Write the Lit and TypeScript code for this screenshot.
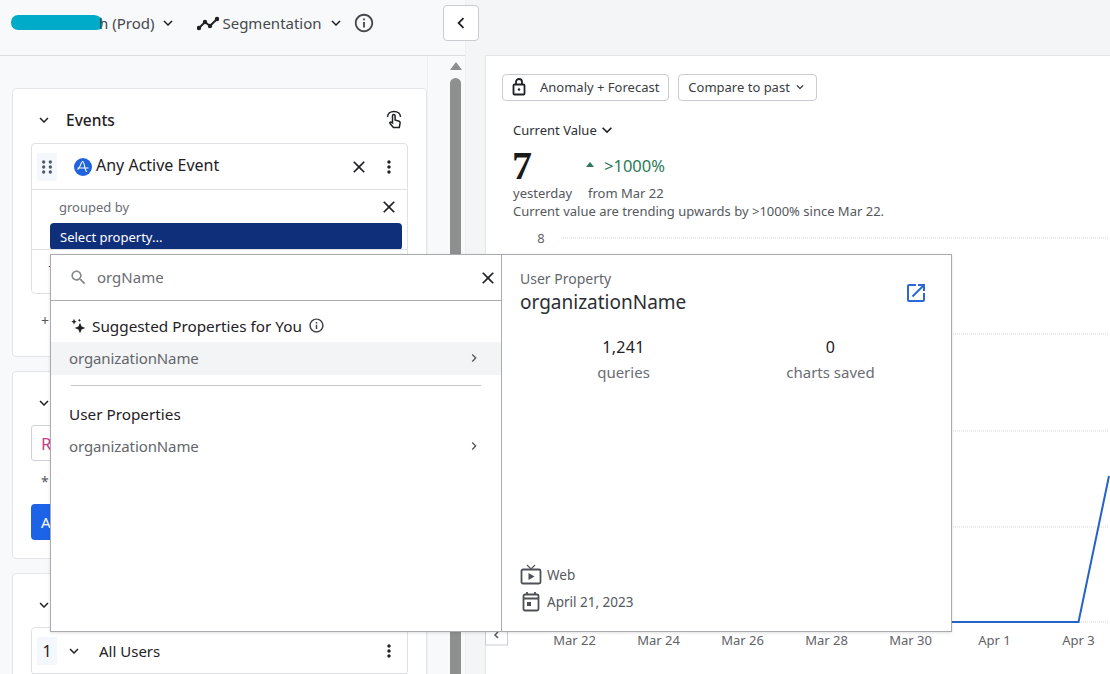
import { LitElement, html, css, svg } from "lit";
import { customElement } from "lit/decorators.js";

const P = {
  close: "M19 6.41 17.59 5 12 10.59 6.41 5 5 6.41 10.59 12 5 17.59 6.41 19 12 13.41 17.59 19 19 17.59 13.41 12z",
  down: "M16.59 8.59 12 13.17 7.41 8.59 6 10l6 6 6-6z",
  right: "M10 6 8.59 7.41 13.17 12l-4.58 4.59L10 18l6-6z",
  left: "M15.41 7.41 14 6l-6 6 6 6 1.41-1.41L10.83 12z",
  info: "M11 7h2v2h-2zm0 4h2v6h-2zm1-9C6.48 2 2 6.48 2 12s4.48 10 10 10 10-4.48 10-10S17.52 2 12 2zm0 18c-4.41 0-8-3.59-8-8s3.59-8 8-8 8 3.59 8 8-3.59 8-8 8z",
  search: "M15.5 14h-.79l-.28-.27C15.41 12.59 16 11.11 16 9.5 16 5.91 13.09 3 9.5 3S3 5.91 3 9.5 5.91 16 9.5 16c1.61 0 3.09-.59 4.23-1.57l.27.28v.79l5 4.99L20.49 19l-4.99-5zm-6 0C7.01 14 5 11.99 5 9.5S7.01 5 9.5 5 14 7.01 14 9.5 11.99 14 9.5 14z",
  open: "M19 19H5V5h7V3H5c-1.11 0-2 .9-2 2v14c0 1.1.89 2 2 2h14c1.1 0 2-.9 2-2v-7h-2v7zM14 3v2h3.59l-9.83 9.83 1.41 1.41L19 6.41V10h2V3h-7z",
  kebab: "M12 8c1.1 0 2-.9 2-2s-.9-2-2-2-2 .9-2 2 .9 2 2 2zm0 2c-1.1 0-2 .9-2 2s.9 2 2 2 2-.9 2-2-.9-2-2-2zm0 6c-1.1 0-2 .9-2 2s.9 2 2 2 2-.9 2-2-.9-2-2-2z",
  drag: "M8 4a2 2 0 1 1 0 4 2 2 0 0 1 0-4zm8 0a2 2 0 1 1 0 4 2 2 0 0 1 0-4zM8 10a2 2 0 1 1 0 4 2 2 0 0 1 0-4zm8 0a2 2 0 1 1 0 4 2 2 0 0 1 0-4zM8 16a2 2 0 1 1 0 4 2 2 0 0 1 0-4zm8 0a2 2 0 1 1 0 4 2 2 0 0 1 0-4z",
  spark: "M15 7l2.4 5.6L23 15l-5.6 2.4L15 23l-2.4-5.6L7 15l5.6-2.4zM6 1l1.2 3.3L10 5.5 7.2 6.7 6 10 4.8 6.7 2 5.5l2.8-1.2zM14 1l.8 1.7 1.7.8-1.7.8-.8 1.7-.8-1.7-1.7-.8 1.7-.8z",
};

const icon = (d: string, size: number, color = "#1f2125") =>
  html`<svg width=${size} height=${size} viewBox="0 0 24 24" fill=${color} class="ic"><path d=${d}></path></svg>`;

const gridYs = [238, 334, 431, 527, 622];
const dates = ["Mar 22", "Mar 24", "Mar 26", "Mar 28", "Mar 30", "Apr 1", "Apr 3"];

@customElement("app-root")
export class AppRoot extends LitElement {
  static styles = css`
    :host {
      display: block;
      width: 1110px;
      height: 674px;
      overflow: hidden;
      position: relative;
      background: #f4f5f7;
      font-family: "Noto Sans", sans-serif;
      color: #1f2125;
    }
    .ic { display: block; flex: none; }
    .app { display: flex; height: 674px; }
    .left {
      width: 466px; flex: none; display: flex; flex-direction: column;
      background: #f8f9fa; border-right: 1px solid #eef0f1; box-sizing: border-box;
    }
    .head {
      height: 56px; flex: none; box-sizing: border-box; border-bottom: 1px solid #dcdee0;
      display: flex; align-items: center; padding: 0 0 10px 11px; font-size: 15px; color: #45484d;
    }
    .scribble { width: 92px; height: 15px; border-radius: 8px 10px 7px 8px; background: #00abc9; }
    .tail { margin-left: -4px; }
    .prod-chev { margin-left: 5px; }
    .seg { margin-left: 20px; display: flex; align-items: center; gap: 3px; }
    .seg-chev { margin-left: 2px; }
    .h-info { margin-left: 8px; }
    .lbody { flex: 1; display: flex; min-height: 0; }
    .cards {
      width: 427px; flex: none; box-sizing: border-box; padding: 32px 0 0 12px;
      display: flex; flex-direction: column; gap: 14px; overflow: hidden;
    }
    .card {
      width: 415px; flex: none; box-sizing: border-box; background: #fff;
      border: 1px solid #e3e5e8; border-radius: 4px; padding: 0 18px;
    }
    .c1 { height: 269px; }
    .c2 { height: 188px; }
    .c3 { height: 120px; }
    .chead { height: 53px; box-sizing: border-box; padding: 9px 0 0 4px; display: flex; align-items: center; gap: 6px; }
    .c1 .chead { margin-bottom: 1px; }
    .chead b { font-weight: 500; font-size: 15.5px; margin-left: 7px; padding-bottom: 1px; }
    .hand { margin-right: 5px; }
    .grow { flex: 1; }
    .box { border: 1px solid #dfe1e4; border-radius: 4px; }
    .evrow {
      height: 46px; box-sizing: border-box; border-bottom: 1px solid #dfe1e4;
      display: flex; align-items: center; padding-left: 5px; padding-right: 8px;
    }
    .handle {
      width: 20px; height: 28px; background: #f4f8fc; display: flex; align-items: center; justify-content: center;
    }
    .logo { margin-left: 17px; margin-right: 4px; }
    .evname { font-size: 16px; padding-bottom: 3px; }
    .xbtn { margin-right: 10px; }
    .grp { padding: 8px 5px 0 18px; height: 59px; box-sizing: border-box; }
    .grpline { display: flex; align-items: center; justify-content: space-between; font-size: 13px; color: #6a6d72; padding: 0 3px 0 9px; height: 18px; }
    .select {
      background: #102f7b; color: #fff; border-radius: 4px; height: 27px; margin-top: 7px;
      display: flex; align-items: center; padding-left: 10px; font-size: 13px;
    }
    .box1 { height: 149px; }
    .addrow { height: 37px; border-top: 1px solid #dfe1e4; padding: 7px 0 0 16px; box-sizing: border-box; font-size: 14px; color: #55585d; }
    .plus { margin: 17px 0 0 10px; font-size: 14px; color: #55585d; }
    .input {
      height: 36px; width: 100%; box-sizing: border-box; border: 1px solid #cfd2d6; border-radius: 3px;
      color: #c2418c; font-size: 17px; display: flex; align-items: center; padding-left: 9px;
    }
    .star { margin: 11px 0 13px 10px; font-size: 14px; color: #55585d; height: 19px; }
    .cta {
      height: 36px; width: 100%; background: #1d63e8; color: #fff; border-radius: 4px; font-size: 15px;
      display: flex; align-items: center; padding-left: 10px; box-sizing: border-box;
    }
    .urow { height: 45px; display: flex; align-items: center; padding: 0 8px 0 5px; border-bottom: 1px solid #dfe1e4; }
    .num { width: 20px; height: 28px; background: #f4f8fc; display: flex; align-items: center; justify-content: center; font-size: 16px; }
    .uchev { margin: 0 16px 0 8px; }
    .uname { font-size: 15px; }
    .scroll { flex: 1; position: relative; display: flex; flex-direction: column; border-left: 1px solid #eef0f1; }
    .arrow {
      width: 0; height: 0; margin: 6px 0 0 22px;
      border-left: 6px solid transparent; border-right: 6px solid transparent; border-bottom: 8px solid #8e8e8e;
    }
    .thumb { flex: 1; width: 11px; margin: 8px 0 0 22px; background: #8f8f8f; border-radius: 6px 6px 0 0; }

    .right { flex: 1; padding: 55px 0 0 19px; min-width: 0; display: flex; }
    .rcard {
      flex: 1; background: #fff; border-top: 1px solid #e3e5e8; border-left: 1px solid #e3e5e8;
      padding: 18px 0 0 16px; box-sizing: border-box; min-width: 0;
    }
    .btns { display: flex; gap: 9px; }
    .btn {
      height: 27px; box-sizing: border-box; border: 1px solid #c9ccd0; border-radius: 4px; display: flex; align-items: center;
      font-size: 13px; color: #3a3d42; padding: 0 9px 2px 9px; gap: 3px; background: #fff;
    }
    .btn.a { gap: 14px; }
    .cur { display: flex; align-items: center; font-size: 13px; margin: 20px 0 0 11px; height: 18px; color: #2d3035; }
    .valrow { display: flex; align-items: center; margin: 9px 0 0 10px; height: 36px; }
    .seven { font-family: "Liberation Serif", serif; font-weight: 700; font-size: 40px; line-height: 36px; width: 74px; color: #1a1a1a; }
    .delta { display: flex; align-items: center; color: #2b7a57; font-size: 16.5px; gap: 10px; padding-bottom: 1px; }
    .tri { width: 0; height: 0; border-left: 4px solid transparent; border-right: 4px solid transparent; border-bottom: 5px solid #2b7a57; margin-top: -2px; }
    .sub { display: flex; font-size: 13px; color: #55585d; margin: 0 0 0 11px; height: 18px; line-height: 18px; }
    .sub span:first-child { width: 75px; }
    .desc { font-size: 13px; color: #55585d; margin-left: 11px; height: 18px; line-height: 18px; }
    .chart { display: block; margin: 8px 0 0 -17px; }
    .chart text { font-family: "Noto Sans", sans-serif; font-size: 13px; fill: #5f6267; }

    .collapse {
      position: absolute; left: 443px; top: 5px; width: 36px; height: 36px; box-sizing: border-box;
      background: #fff; border: 1px solid #c9ccd0; border-radius: 4px; display: flex; align-items: center; justify-content: center;
    }

    .pop {
      position: absolute; left: 50px; top: 254px; width: 902px; height: 378px; box-sizing: border-box;
      background: #fff; border: 1px solid #a9abae; display: flex; box-shadow: 0 1px 3px rgba(0,0,0,.12);
    }
    .pl { width: 451px; flex: none; border-right: 1px solid #a9abae; box-sizing: border-box; }
    .psearch {
      height: 46px; box-sizing: border-box; border-bottom: 1px solid #a9abae; display: flex; align-items: center;
      padding: 0 3px 0 18px; font-size: 15px; color: #6a6d72;
    }
    .psearch .q { margin-left: 9px; flex: 1; padding-bottom: 1px; }
    .sect { display: flex; align-items: center; box-sizing: border-box; font-size: 15.3px; padding: 8px 0 0 19px; height: 41px; gap: 6px; }
    .sect .inf { margin-left: 0; }
    .item {
      height: 33px; box-sizing: border-box; display: flex; align-items: center; justify-content: space-between; padding: 0 19px 2px 18px;
      font-size: 15px; letter-spacing: -0.1px; color: #63666b;
    }
    .item.hi { background: #f3f4f6; }
    .hr { height: 1px; background: #c6c8cb; margin: 10px 20px 0; }
    .sect2 { display: flex; align-items: center; box-sizing: border-box; font-size: 15.3px; padding: 4px 0 0 18px; height: 36px; margin-top: 8px; }
    .pr { flex: 1; padding: 14px 23px 0 18px; display: flex; flex-direction: column; min-width: 0; }
    .ptop { display: flex; justify-content: space-between; align-items: flex-start; }
    .popen { margin-top: 12px; }
    .ptype { font-size: 14px; color: #63666b; line-height: 20px; }
    .pname { font-size: 19px; color: #2b2e33; line-height: 26px; }
    .stats { display: grid; grid-template-columns: 207px 207px; margin-top: 20px; text-align: center; }
    .sv { font-size: 16px; line-height: 24px; letter-spacing: .3px; }
    .sl { font-size: 15px; color: #6a6d72; line-height: 26px; }
    .meta { margin-top: auto; padding-bottom: 17px; font-size: 13.5px; color: #55585d; display: flex; flex-direction: column; gap: 3px; }
    .mrow { display: flex; align-items: center; gap: 5px; height: 24px; }
  `;

  render() {
    return html`
      <div class="app">
        <section class="left">
          <header class="head">
            <span class="scribble"></span><span class="tail">h (Prod)</span>
            <span class="prod-chev">${icon(P.down, 18)}</span>
            <span class="seg">
              <svg class="ic" width="22" height="16" viewBox="0 0 22 16" fill="none" stroke="#1f2125" stroke-width="2">
                <path d="M2 13l6-6 5 4 7-7"></path>
                <circle cx="2" cy="13" r="1.2" fill="#1f2125"></circle><circle cx="8" cy="7" r="1.2" fill="#1f2125"></circle>
                <circle cx="13" cy="11" r="1.2" fill="#1f2125"></circle><circle cx="20" cy="4" r="1.2" fill="#1f2125"></circle>
              </svg>
              Segmentation <span class="seg-chev">${icon(P.down, 18)}</span>
            </span>
            <span class="h-info">${icon(P.info, 22, "#45484d")}</span>
          </header>
          <div class="lbody">
            <div class="cards">
              <div class="card c1">
                <div class="chead">
                  ${icon(P.down, 18)}<b>Events</b><span class="grow"></span>
                  <svg class="ic hand" width="18" height="20" viewBox="0 0 18 20" fill="none" stroke="#1f2125" stroke-width="1.5">
                    <path d="M2.5 7C2.5 3.5 5.5 1.5 9 1.5s6.5 2 6.5 5.5"></path>
                    <path d="M7.5 13V5.8a1.3 1.3 0 0 1 2.6 0V10l4 1.2c.9.3 1.2 1 1 1.9l-.8 4.4H8.4L5 13.6c-.7-.8.5-2 1.5-1.2z" fill="#fff"></path>
                  </svg>
                </div>
                <div class="box box1">
                  <div class="evrow">
                    <div class="handle">${icon(P.drag, 20, "#4c5a6a")}</div>
                    <svg class="logo ic" width="18" height="18" viewBox="0 0 18 18">
                      <circle cx="9" cy="9" r="9" fill="#1f63dd"></circle>
                      <path d="M3.5 11.5C6 11 7 3.5 8.7 3.5S11 14 13 13.5M3.5 10h11" fill="none" stroke="#fff" stroke-width="1.1"></path>
                    </svg>
                    <span class="evname">Any Active Event</span><span class="grow"></span>
                    <span class="xbtn">${icon(P.close, 20)}</span>
                    ${icon(P.kebab, 20)}
                  </div>
                  <div class="grp">
                    <div class="grpline"><span>grouped by</span>${icon(P.close, 20)}</div>
                    <div class="select">Select property...</div>
                  </div>
                  <div class="addrow">+</div>
                </div>
                <div class="plus">+</div>
              </div>
              <div class="card c2">
                <div class="chead">${icon(P.down, 18)}</div>
                <div class="input">R</div>
                <div class="star">*</div>
                <div class="cta">A</div>
              </div>
              <div class="card c3">
                <div class="chead">${icon(P.down, 18)}</div>
                <div class="box">
                  <div class="urow">
                    <div class="num">1</div>
                    <span class="uchev">${icon(P.down, 18)}</span>
                    <span class="uname">All Users</span><span class="grow"></span>
                    ${icon(P.kebab, 20)}
                  </div>
                </div>
              </div>
            </div>
            <div class="scroll"><div class="arrow"></div><div class="thumb"></div></div>
          </div>
        </section>
        <main class="right">
          <div class="rcard">
            <div class="btns">
              <div class="btn a">
                <svg class="ic" width="14" height="18" viewBox="0 0 14 18" fill="none" stroke="#1f2125" stroke-width="1.8">
                  <rect x="1.5" y="6.5" width="11" height="10" rx="1"></rect>
                  <path d="M4 6.5V4a3 3 0 0 1 6 0v2.5"></path>
                  <circle cx="7" cy="11.5" r="1.2" fill="#1f2125" stroke="none"></circle>
                </svg>
                Anomaly + Forecast
              </div>
              <div class="btn">Compare to past ${icon(P.down, 14)}</div>
            </div>
            <div class="cur">Current Value ${icon(P.down, 20)}</div>
            <div class="valrow"><div class="seven">7</div><div class="delta"><span class="tri"></span>&gt;1000%</div></div>
            <div class="sub"><span>yesterday</span><span>from Mar 22</span></div>
            <div class="desc">Current value are trending upwards by &gt;1000% since Mar 22.</div>
            <svg class="chart" width="625" height="430" viewBox="486 228 625 430">
              ${gridYs.map((y) => svg`<line x1="562" x2="1110" y1=${y} y2=${y} stroke="#d5d7da" stroke-dasharray="1 1"></line>`)}
              <text x="542" y="243" text-anchor="middle">8</text>
              ${dates.map((d, i) => svg`<text x=${575.5 + i * 84} y="645" text-anchor="middle">${d}</text>`)}
              <rect x="486.5" y="620" width="22" height="25" fill="#fff" stroke="#c9ccd0"></rect>
              <path d="M499 632l-3 3 3 3" fill="none" stroke="#55585d" stroke-width="1.5"></path>
              <path d="M562 622H1079.5L1110 476" fill="none" stroke="#2563c4" stroke-width="2"></path>
            </svg>
          </div>
        </main>
      </div>
      <div class="collapse">${icon(P.left, 22)}</div>
      <div class="pop">
        <div class="pl">
          <div class="psearch">
            ${icon(P.search, 19, "#85888c")}
            <span class="q">orgName</span>
            ${icon(P.close, 20)}
          </div>
          <div class="sect">
            ${icon(P.spark, 16)}
            <span>Suggested Properties for You</span>
            <span class="inf">${icon(P.info, 17, "#3a3d42")}</span>
          </div>
          <div class="item hi"><span>organizationName</span>${icon(P.right, 16, "#55585d")}</div>
          <div class="hr"></div>
          <div class="sect2">User Properties</div>
          <div class="item"><span>organizationName</span>${icon(P.right, 16, "#55585d")}</div>
        </div>
        <div class="pr">
          <div class="ptop">
            <div>
              <div class="ptype">User Property</div>
              <div class="pname">organizationName</div>
            </div>
            <span class="popen">${icon(P.open, 24, "#2b69d6")}</span>
          </div>
          <div class="stats">
            <div><div class="sv">1,241</div><div class="sl">queries</div></div>
            <div><div class="sv">0</div><div class="sl">charts saved</div></div>
          </div>
          <div class="meta">
            <div class="mrow">
              <svg class="ic" width="22" height="22" viewBox="0 0 22 22" fill="none" stroke="#4d5056" stroke-width="1.8">
                <rect x="1.5" y="5.5" width="19" height="14" rx="1.5"></rect>
                <path d="M7 1l4 4 4-4" stroke-width="1.1"></path>
                <path d="M8.5 9v7l6-3.5z" fill="#4d5056" stroke="none"></path>
              </svg>
              Web
            </div>
            <div class="mrow">
              <svg class="ic" width="22" height="22" viewBox="0 0 22 22" fill="none" stroke="#4d5056" stroke-width="1.8">
                <rect x="3.5" y="3.5" width="15" height="16" rx="1.5"></rect>
                <path d="M3.5 7.5h15M7 1v3M15 1v3"></path>
                <rect x="7" y="11" width="4" height="4" fill="#4d5056" stroke="none"></rect>
              </svg>
              April 21, 2023
            </div>
          </div>
        </div>
      </div>
    `;
  }
}
